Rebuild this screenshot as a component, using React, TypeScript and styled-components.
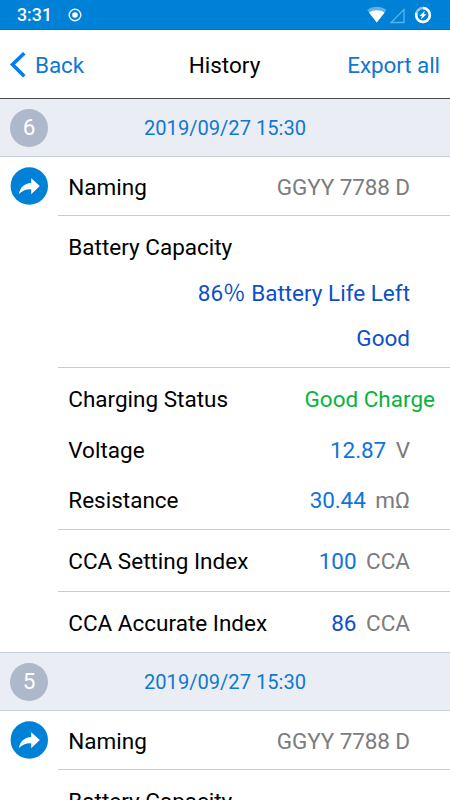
import React from 'react';
import styled, { createGlobalStyle } from 'styled-components';

const GlobalStyle = createGlobalStyle`
  * { box-sizing: border-box; }
  html, body { margin: 0; padding: 0; background: #fff; }
  body {
    overflow: hidden;
    font-family: Roboto, "Noto Sans CJK SC", sans-serif;
    font-weight: 400;
  }
`;

const Screen = styled.main`
  width: 450px;
  height: 800px;
  overflow: hidden;
  background: #fff;
  color: #000;
  font-size: 22.5px;
`;

const StatusBar = styled.div`
  display: flex;
  align-items: center;
  height: 30px;
  padding: 0 18px 0 17px;
  background: #0081d8;
  border-bottom: 1px solid #0a70c4;
  color: #fff;
`;

const Clock = styled.span`
  width: 50.5px;
  font-size: 17.8px;
  font-weight: 500;
  line-height: 30px;
  padding-top: 1px;
`;

const StatusIcons = styled.div`
  display: flex;
  align-items: center;
  margin-left: auto;
`;

const NavBar = styled.header`
  display: grid;
  grid-template-columns: 1fr auto 1fr;
  align-items: center;
  height: 69px;
  padding: 1px 10px 0 9px;
  border-bottom: 1px solid #4a4a4e;
  line-height: 26px;
`;

const NavButton = styled.button<{ $end?: boolean }>`
  display: flex;
  align-items: center;
  gap: 9px;
  justify-self: ${(p) => (p.$end ? 'end' : 'start')};
  padding: 0;
  border: 0;
  background: none;
  color: #0f78d2;
  font: inherit;
  letter-spacing: -0.1px;
`;

const Title = styled.h1`
  margin: 0;
  font-size: 22.5px;
  font-weight: inherit;
`;

const RecordHeader = styled.div`
  display: grid;
  grid-template-columns: 38px 1fr 38px;
  align-items: center;
  height: 58px;
  padding: 0 10px;
  background: #eaedf3;
  border-bottom: 1px solid #c5d0db;
`;

const IndexBadge = styled.span`
  display: grid;
  place-items: center;
  width: 38px;
  height: 38px;
  border-radius: 50%;
  background: #adb9ca;
  color: #fff;
  line-height: 37px;
`;

const DateText = styled.time`
  text-align: center;
  color: #0f78d2;
  font-size: 20.1px;
  line-height: 24px;
  padding-top: 1px;
`;

const RecordBody = styled.div`
  display: grid;
  grid-template-columns: 58px 1fr;
  border-bottom: 1px solid #c5d0db;
`;

const ShareButton = styled.button`
  display: block;
  width: 38px;
  height: 38px;
  margin: 10px 0 0 10px;
  padding: 0;
  border: 0;
  background: none;
`;

const Group = styled.section<{ $top: number; $height: number }>`
  height: ${(p) => p.$height}px;
  padding-top: ${(p) => p.$top}px;
  border-bottom: 1px solid #cbcbcd;

  &:last-child { border-bottom: 0; }
`;

const Row = styled.div<{ $height?: number; $wide?: boolean }>`
  display: flex;
  align-items: center;
  justify-content: space-between;
  height: ${(p) => p.$height ?? 50.5}px;
  padding: 0 ${(p) => (p.$wide ? 15 : 40)}px 0 10.3px;
  white-space: nowrap;
  line-height: 26px;
`;

const tones = {
  grey: '#7c7c7e',
  blue: '#0f74da',
  deep: '#0d50c8',
  green: '#08b43c',
};

const Value = styled.span<{ $tone: keyof typeof tones }>`
  margin-left: auto;
  color: ${(p) => tones[p.$tone]};
  letter-spacing: ${(p) => (p.$tone === 'grey' || p.$tone === 'blue' ? '-0.1px' : '0')};
`;

const Unit = styled.span`
  margin-left: 9.6px;
  color: ${tones.grey};
`;

const ChevronIcon = () => (
  <svg width="17" height="26" viewBox="0 0 17 26" fill="none">
    <path d="M15.3 1.2 3.5 12.5l11.8 11.8" stroke="#067cf5" strokeWidth="3.6" />
  </svg>
);

const RecordingIcon = () => (
  <svg width="14" height="14" viewBox="0 0 14 14" fill="none">
    <circle cx="7" cy="7" r="5.8" stroke="#e6f2fb" strokeWidth="1.4" />
    <circle cx="7" cy="7" r="2.8" fill="#fff" />
  </svg>
);

const SystemIcons = () => (
  <svg width="66" height="20" viewBox="0 0 66 20" fill="none">
    <path d="M1.2 5C6.8.8 14.8.8 20.4 5L10.8 17.5Z" fill="#5cb1e8" />
    <path d="M3 7.6c4.8-3 10.8-3 15.6 0l-7.8 9.9Z" fill="#fff" />
    <path d="M38 4.5v13H25Z" stroke="#5cb1e8" strokeWidth="1.3" />
    <circle cx="57" cy="10" r="6.9" stroke="#8dc9ef" strokeWidth="2.5" />
    <path d="M57 3.1a6.9 6.9 0 1 1-6.6 4.9" stroke="#fff" strokeWidth="2.5" />
    <path d="m58.7 5.8-5.2 5.2h2.5l-1.2 3.6 5.7-5.4H58Z" fill="#fff" />
  </svg>
);

const ShareIcon = () => (
  <svg width="38" height="38" viewBox="0 0 38 38">
    <circle cx="19.3" cy="19" r="18.7" fill="#0081d8" />
    <path d="M21.2 11.3 29.8 19l-8.6 8.2v-5C15.8 22 12.4 23.5 8.9 27c1.1-6.4 5.4-10.5 12.3-11Z" fill="#fff" />
  </svg>
);

const Record = ({ index }: { index: number }) => (
  <article>
    <RecordHeader>
      <IndexBadge>{index}</IndexBadge>
      <DateText>2019/09/27 15:30</DateText>
    </RecordHeader>
    <RecordBody>
      <ShareButton aria-label="Share"><ShareIcon /></ShareButton>
      <div>
        <Group $top={1} $height={59}>
          <Row $height={57}>Naming<Value $tone="grey">GGYY 7788 D</Value></Row>
        </Group>
        <Group $top={8} $height={152}>
          <Row $height={45}>Battery Capacity</Row>
          <Row $height={48}><Value $tone="deep">86％ Battery Life Left</Value></Row>
          <Row $height={41}><Value $tone="deep">Good</Value></Row>
        </Group>
        <Group $top={6} $height={162}>
          <Row $wide>Charging Status<Value $tone="green">Good Charge</Value></Row>
          <Row>Voltage<Value $tone="blue">12.87</Value><Unit>V</Unit></Row>
          <Row>Resistance<Value $tone="blue">30.44</Value><Unit>mΩ</Unit></Row>
        </Group>
        <Group $top={1} $height={62}>
          <Row $height={60}>CCA Setting Index<Value $tone="blue">100</Value><Unit>CCA</Unit></Row>
        </Group>
        <Group $top={1} $height={60}>
          <Row $height={60}>CCA Accurate Index<Value $tone="deep">86</Value><Unit>CCA</Unit></Row>
        </Group>
      </div>
    </RecordBody>
  </article>
);

export default function App() {
  return (
    <>
      <GlobalStyle />
      <Screen>
        <StatusBar>
          <Clock>3:31</Clock>
          <RecordingIcon />
          <StatusIcons><SystemIcons /></StatusIcons>
        </StatusBar>
        <NavBar>
          <NavButton><ChevronIcon />Back</NavButton>
          <Title>History</Title>
          <NavButton $end>Export all</NavButton>
        </NavBar>
        <Record index={6} />
        <Record index={5} />
      </Screen>
    </>
  );
}
